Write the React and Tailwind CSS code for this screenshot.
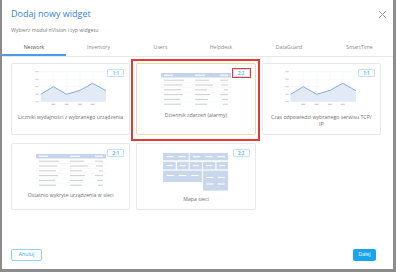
import React from 'react';

const tabs = [
  { name: 'Network', w: 'w-[64px]', active: true },
  { name: 'Inventory', w: 'w-[65px]' },
  { name: 'Users', w: 'w-[59px]' },
  { name: 'Helpdesk', w: 'w-[62px]' },
  { name: 'DataGuard', w: 'w-[74px]' },
  { name: 'SmartTime', w: 'w-[67px]' },
];

const Badge = ({ children, marked }) => (
  <div className="absolute top-[5px] right-[5px] w-[17px] h-[8px] border border-[#bfe0f6] rounded-[1px] bg-white flex items-center justify-center text-[4.6px] font-semibold text-[#3aa6e6] leading-none">
    {children}
    {marked && <div className="absolute -inset-[2px] border-[1.5px] border-[#e53935]" />}
  </div>
);

const LineChart = () => {
  const grid = [1.7, 9.3, 16.7, 24.3, 31.7];
  return (
    <svg width="74" height="36" viewBox="0 0 74 36" className="block mx-auto">
      {grid.map((y) => (
        <g key={y}>
          <line x1="1.3" x2="4.7" y1={y} y2={y} stroke="#cfcfcf" strokeWidth="1" />
          <line x1="6.7" x2="72" y1={y} y2={y} stroke="#edf0f4" strokeWidth="0.5" />
        </g>
      ))}
      {[19.3, 32.7, 46, 58.7].map((x) => (
        <line key={x} x1={x} x2={x} y1="1.7" y2="31.7" stroke="#f1f3f6" strokeWidth="0.5" />
      ))}
      <polygon
        points="6.7,24.3 19.3,16.7 32.7,24.3 46,20.3 58.7,13.3 72,20.7 72,31.7 6.7,31.7"
        fill="#e2eaf6"
      />
      <polyline
        points="6.7,24.3 19.3,16.7 32.7,24.3 46,20.3 58.7,13.3 72,20.7"
        fill="none"
        stroke="#7ea3d8"
        strokeWidth="0.9"
      />
      {[19.3, 32.7, 46, 58.7].map((x) => (
        <line key={'l' + x} x1={x - 2} x2={x + 2} y1="34.3" y2="34.3" stroke="#c8c8c8" strokeWidth="1.1" />
      ))}
    </svg>
  );
};

const rows = [
  [20, 14, 8],
  [18, 18, 7],
  [17, 12, 4],
  [19, 15, 8],
  [16, 13, 6],
  [17, 12, 5],
];

const TableThumb = () => (
  <svg width="70" height="34" viewBox="0 0 70 34" className="block mx-auto">
    <rect x="0" y="0" width="70" height="4.5" fill="#c3d4ec" />
    <line x1="3" x2="12" y1="2.25" y2="2.25" stroke="#fff" strokeWidth="1.1" />
    <line x1="34" x2="44" y1="2.25" y2="2.25" stroke="#fff" strokeWidth="1.1" />
    <line x1="59" x2="67" y1="2.25" y2="2.25" stroke="#fff" strokeWidth="1.1" />
    {rows.map(([a, b, c], i) => {
      const y = 7.2 + i * 4.8;
      return (
        <g key={i}>
          <line x1="3" x2={3 + a} y1={y} y2={y} stroke="#d0d0d0" strokeWidth="1.1" />
          <line x1="34" x2={34 + b} y1={y} y2={y} stroke="#d0d0d0" strokeWidth="1.1" />
          <line x1={67 - c} x2="67" y1={y} y2={y} stroke="#d0d0d0" strokeWidth="1.1" />
          {i < rows.length - 1 && (
            <line x1="0" x2="70" y1={y + 2.4} y2={y + 2.4} stroke="#eef0f3" strokeWidth="0.5" />
          )}
        </g>
      );
    })}
  </svg>
);

const Dashes = ({ x, y, w, n }) => {
  const step = w / n;
  return Array.from({ length: n }).map((_, i) => (
    <line
      key={i}
      x1={x + i * step + step * 0.2}
      x2={x + i * step + step * 0.8}
      y1={y}
      y2={y}
      stroke="#fff"
      strokeWidth="1.1"
    />
  ));
};

const MapThumb = () => (
  <svg width="66" height="38" viewBox="0 0 66 38" className="block mx-auto">
    <rect x="0" y="0" width="25.7" height="7.3" fill="#c8d7ec" />
    <Dashes x={1} y={3.65} w={24} n={2} />
    <rect x="26.7" y="0" width="38.3" height="7.3" fill="#c8d7ec" />
    <Dashes x={27.5} y={3.65} w={37} n={3} />
    {[
      [0, 12.7],
      [14, 11.7],
      [26.7, 12.3],
      [40, 12.3],
      [53.4, 11.6],
    ].map(([x, w]) => (
      <g key={x}>
        <rect x={x} y="8.8" width={w} height="7.6" fill="#c8d7ec" />
        <Dashes x={x + 1} y={12.6} w={w - 2} n={1} />
      </g>
    ))}
    <rect x="0" y="17.6" width="39" height="11.4" fill="#c8d7ec" />
    <Dashes x={1} y={22.5} w={37} n={3} />
    <rect x="40" y="17.6" width="25" height="20" fill="#c8d7ec" />
    <Dashes x={41} y={24.5} w={23} n={2} />
    <Dashes x={41} y={31} w={23} n={2} />
  </svg>
);

const Card = ({ children, label, badge, selected, marked, h }) => (
  <div className={`relative ${h}`}>
    <div
      className={`relative h-full rounded-[2px] border bg-white pt-[6px] ${
        selected ? 'border-[#f6d8a6]' : 'border-[#e6e9ed] shadow-[0_0_1px_rgba(0,0,0,0.04)]'
      }`}
    >
      {children}
      <p className="px-[3px] text-center text-[5.2px] leading-[6.6px] text-[#6e6e6e]">{label}</p>
      <Badge marked={marked}>{badge}</Badge>
    </div>
    {marked && <div className="absolute -left-[5px] -right-[4px] -top-[4px] -bottom-[6px] border-2 border-[#e53935] pointer-events-none" />}
  </div>
);

export default function App() {
  return (
    <div
      className="w-[396px] h-[272px] bg-[#8c8c8c] pl-[2px] pr-[3px] pb-[3px]"
      style={{ fontFamily: '"Open Sans", "DejaVu Sans", sans-serif' }}
    >
      <div className="relative h-full bg-white flex flex-col">
        <button className="absolute top-[10px] right-[6px] w-[9px] h-[9px] text-[#6d97d1]">
          <svg viewBox="0 0 10 10" width="9" height="9">
            <path d="M1 1 L9 9 M9 1 L1 9" stroke="currentColor" strokeWidth="0.9" fill="none" />
          </svg>
        </button>

        <div className="pl-[9px] pt-[8px]">
          <h1 className="text-[9px] leading-[12px] text-[#3a7fd5]">Dodaj nowy widget</h1>
          <p className="mt-[7px] text-[5.2px] leading-[7px] text-[#7a7a7a]">Wybierz moduł nVision i typ widgetu</p>
        </div>

        <div className="mt-[6px] flex border-b border-[#e8e8e8]">
          {tabs.map((t) => (
            <div
              key={t.name}
              className={`${t.w} h-[16px] pt-[1px] flex items-center justify-center text-[5.2px] leading-[7px] border-b-2 ${
                t.active ? 'border-[#4a9be8] text-[#555]' : 'border-transparent text-[#8a8a8a]'
              }`}
            >
              {t.name}
            </div>
          ))}
        </div>

        <div className="mt-[6px] pl-[9px] pr-[12px] grid grid-cols-3 gap-x-[6px] gap-y-[8px]">
          <Card h="h-[72px]" badge="1:1" label="Liczniki wydajności z wybranego urządzenia">
            <LineChart />
            <div className="h-[8px]" />
          </Card>
          <Card h="h-[72px]" badge="2:2" selected marked label="Dziennik zdarzeń (alarmy)">
            <div className="mt-[3px]">
              <TableThumb />
            </div>
            <div className="h-[5px]" />
          </Card>
          <Card
            h="h-[72px]"
            badge="1:1"
            label={
              <>
                Czas odpowiedzi wybranego serwisu TCP/
                <br />
                IP
              </>
            }
          >
            <LineChart />
            <div className="h-[8px]" />
          </Card>
          <Card h="h-[67px]" badge="2:1" label="Ostatnio wykryte urządzenia w sieci">
            <div className="mt-[4px]">
              <TableThumb />
            </div>
            <div className="h-[4px]" />
          </Card>
          <Card h="h-[67px]" badge="2:2" label="Mapa sieci">
            <div className="mt-[3px]">
              <MapThumb />
            </div>
            <div className="h-[5px]" />
          </Card>
        </div>

        <div className="mt-auto flex items-center justify-between pl-[9px] pr-[17px] pb-[8px]">
          <button className="w-[31px] h-[12px] rounded-[2px] border border-[#8fd0f5] text-[5.2px] text-[#2f9fe6] flex items-center justify-center">
            Anuluj
          </button>
          <button className="w-[23px] h-[12px] rounded-[2px] bg-[#19a5ee] text-[5.2px] text-white flex items-center justify-center">
            Dalej
          </button>
        </div>
      </div>
    </div>
  );
}
